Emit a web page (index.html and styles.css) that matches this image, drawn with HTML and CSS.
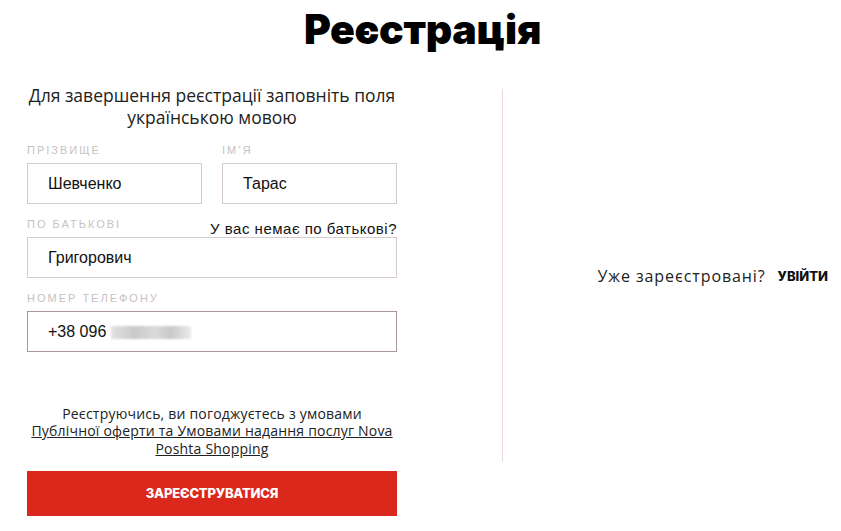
FILE: index.html
```html
<!DOCTYPE html>
<html lang="uk">
<head>
<meta charset="utf-8">
<title>Реєстрація</title>
<link rel="stylesheet" href="styles.css">
</head>
<body>
<h1 class="title">Реєстрація</h1>
<div class="main">
  <form class="form">
    <p class="intro">Для завершення реєстрації заповніть поля українською мовою</p>
    <div class="row2">
      <div class="field">
        <div class="label-row"><span class="label">Прізвище</span></div>
        <div class="input">Шевченко</div>
      </div>
      <div class="field">
        <div class="label-row"><span class="label">Ім’я</span></div>
        <div class="input">Тарас</div>
      </div>
    </div>
    <div class="field">
      <div class="label-row"><span class="label">По батькові</span><span class="nopat">У вас немає по батькові?</span></div>
      <div class="input">Григорович</div>
    </div>
    <div class="field">
      <div class="label-row"><span class="label">Номер телефону</span></div>
      <div class="input focused">+38 096 <span class="blur"></span></div>
    </div>
    <p class="terms">Реєструючись, ви погоджуєтесь з умовами<br><a href="#">Публічної оферти та Умовами надання послуг Nova<br>Poshta Shopping</a></p>
    <button type="button" class="submit">Зареєструватися</button>
  </form>
  <div class="side">
    <span class="already">Уже зареєстровані?</span>
    <a href="#" class="login">Увійти</a>
  </div>
</div>
</body>
</html>
```
FILE: styles.css
```css
* { box-sizing: border-box; }
body {
  margin: 0;
  background: #fff;
  color: #111;
  font-family: "Open Sans", "Liberation Sans", sans-serif;
}
.title {
  margin: 0;
  padding-top: 6px;
  padding-left: 4px;
  height: 60px;
  text-align: center;
  font-family: Inter, sans-serif;
  font-weight: 900;
  font-size: 41px;
  line-height: 46px;
  letter-spacing: -0.3px;
  color: #000;
}
.main {
  display: flex;
  padding-left: 27px;
  padding-top: 24px;
}
.form {
  width: 370px;
  display: flex;
  flex-direction: column;
}
.intro {
  margin: 0 0 15px;
  text-align: center;
  font-size: 17.5px;
  line-height: 22px;
  color: #222;
}
.row2 {
  display: flex;
  gap: 20px;
}
.row2 .field { flex: 1; }
.field { margin-bottom: 13px; }
.label-row {
  height: 20px;
  display: flex;
  justify-content: space-between;
}
.label {
  font-family: "Liberation Sans", sans-serif;
  font-size: 11px;
  line-height: 14px;
  letter-spacing: 2px;
  text-transform: uppercase;
  color: #c6c2c2;
}
.nopat {
  align-self: flex-end;
  font-family: "Liberation Sans", sans-serif;
  font-size: 15px;
  line-height: 16px;
  letter-spacing: 0.5px;
  color: #111;
}
.input {
  height: 41px;
  border: 1px solid #d6cccc;
  padding: 0 20px;
  display: flex;
  align-items: center;
  font-family: "Liberation Sans", sans-serif;
  font-size: 16px;
  color: #111;
  white-space: pre;
}
.input.focused { border-color: #a89898; }
.blur {
  display: inline-block;
  width: 80px;
  height: 13px;
  margin-top: 2px;
  background: linear-gradient(90deg, #e2e2e2, #c9c9c9 30%, #dadada 55%, #c8c8c8 75%, #ececec);
  filter: blur(1.2px);
}
.terms {
  margin: 40px 0 14px;
  text-align: center;
  font-size: 14px;
  line-height: 17.3px;
  letter-spacing: 0.2px;
  color: #222;
}
.terms a { color: #222; text-decoration: underline; }
.submit {
  height: 45px;
  border: 0;
  background: #da291c;
  color: #fff;
  font-family: Inter, sans-serif;
  font-weight: 800;
  font-size: 13px;
  letter-spacing: -0.2px;
  text-transform: uppercase;
  cursor: pointer;
}
.side {
  flex: 1;
  margin-left: 105px;
  margin-top: 5px;
  height: 373px;
  border-left: 1px solid #ead9dc;
  display: flex;
  align-items: center;
  justify-content: flex-end;
  padding-right: 13px;
}
.already {
  font-size: 16px;
  letter-spacing: 0.9px;
  color: #222;
  margin-right: 12px;
}
.login {
  font-family: Inter, sans-serif;
  font-weight: 800;
  font-size: 13px;
  color: #111;
  text-decoration: none;
  text-transform: uppercase;
}
```
